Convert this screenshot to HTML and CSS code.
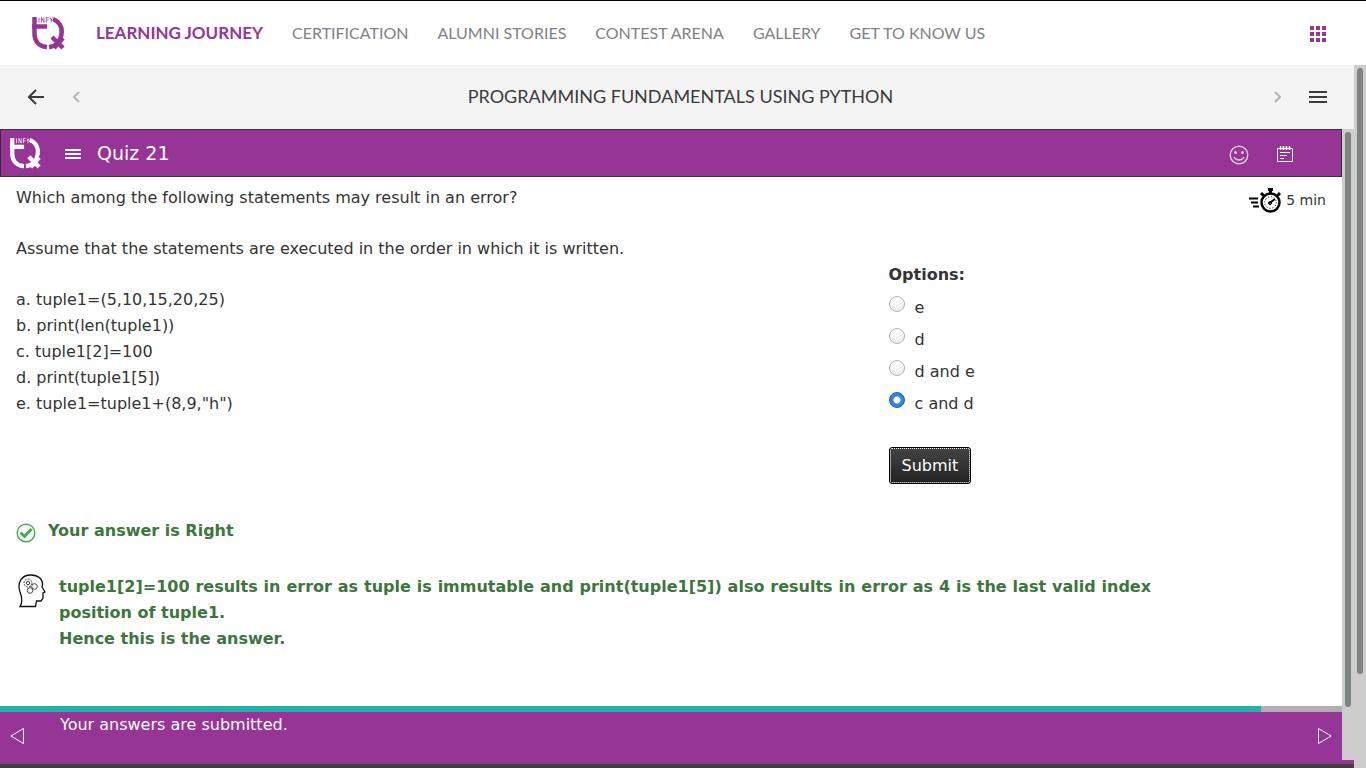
FILE: index.html
```html
<!DOCTYPE html>
<html lang="en">
<head>
<meta charset="utf-8">
<title>Programming Fundamentals using Python</title>
<link rel="stylesheet" href="styles.css">
</head>
<body>
<svg class="defs" width="0" height="0" aria-hidden="true">
  <symbol id="logo" viewBox="0 0 34 34">
    <path d="M3.500 1V18C3.500 26 9 30.500 16 31M1 10.500H16" fill="none" stroke="currentColor" stroke-width="4.500"/>
    <path d="M22 3C29 6 31.500 12 30.500 18C29.500 25 25 30.500 18 31M21 21L32 32M32 22L23 32" fill="none" stroke="currentColor" stroke-width="4.500"/>
    <path d="M8 1.500V6.500M10.500 6.500V1.500L13 6.500V1.500M15.300 6.500V1.500H17.500M15.300 4H17.500M19 1.500L20.200 4L21.400 1.500M20.200 4V6.500" fill="none" stroke="currentColor" stroke-width=".8"/>
  </symbol>
</svg>
<header class="site-header">
  <a href="#" class="brand" aria-label="InfyTQ"><svg width="34" height="34"><use href="#logo"/></svg></a>
  <nav class="site-nav">
    <a href="#" class="current">LEARNING JOURNEY</a>
    <a href="#">CERTIFICATION</a>
    <a href="#">ALUMNI STORIES</a>
    <a href="#">CONTEST ARENA</a>
    <a href="#">GALLERY</a>
    <a href="#">GET TO KNOW US</a>
  </nav>
  <button class="icon-button apps" aria-label="Apps"><svg width="16" height="16" fill="currentColor"><path d="M0 0h4v4H0zM6 0h4v4H6zM12 0h4v4h-4zM0 6h4v4H0zM6 6h4v4H6zM12 6h4v4h-4zM0 12h4v4H0zM6 12h4v4H6zM12 12h4v4h-4z"/></svg></button>
</header>
<div class="workspace">
  <div class="course">
    <div class="course-bar">
      <button class="icon-button" aria-label="Back"><svg width="16" height="16" fill="none" stroke="currentColor" stroke-width="2"><path d="M16 8H1M8 1L1 8L8 15"/></svg></button>
      <button class="icon-button faint" aria-label="Previous"><svg width="8" height="12" fill="none" stroke="currentColor" stroke-width="2"><path d="M7 1L2 6L7 11"/></svg></button>
      <h1 class="course-title">PROGRAMMING FUNDAMENTALS USING PYTHON</h1>
      <button class="icon-button faint" aria-label="Next"><svg width="8" height="12" fill="none" stroke="currentColor" stroke-width="2"><path d="M2 1L7 6L2 11"/></svg></button>
      <button class="icon-button" aria-label="Contents"><svg width="18" height="12" fill="currentColor"><path d="M0 0h18v2H0zM0 5h18v2H0zM0 10h18v2H0z"/></svg></button>
    </div>
    <div class="frame">
      <div class="player">
        <div class="quiz-bar">
          <svg class="quiz-logo" width="32" height="32"><use href="#logo"/></svg>
          <button class="icon-button menu" aria-label="Menu"><svg width="16" height="10" fill="currentColor"><path d="M0 0h16v2H0zM0 4h16v2H0zM0 8h16v2H0z"/></svg></button>
          <h2 class="quiz-title">Quiz 21</h2>
          <button class="icon-button smile" aria-label="Feedback"><svg width="20" height="20" fill="none" stroke="currentColor" stroke-width="1.400"><circle cx="10" cy="10" r="8.800"/><path d="M5 12C7 16 13 16 15 12"/><circle cx="6.500" cy="7.500" r=".8" fill="currentColor"/><circle cx="13.500" cy="7.500" r=".8" fill="currentColor"/></svg></button>
          <button class="icon-button notes" aria-label="Notes"><svg width="16" height="16" fill="none" stroke="currentColor"><path d="M.5 2.500H15.500V15.500H.5ZM3 6.500H13M3 9.500H10M3 12.500H7"/><path d="M3.500 0V4M6.500 0V4M9.500 0V4M12.500 0V4" stroke-width="1.500"/></svg></button>
        </div>
        <main class="quiz">
          <div class="question">
            <p>Which among the following statements may result in an error?</p>
            <p>Assume that the statements are executed in the order in which it is written.</p>
            <p>a. tuple1=(5,10,15,20,25)<br>b. print(len(tuple1))<br>c. tuple1[2]=100<br>d. print(tuple1[5])<br>e. tuple1=tuple1+(8,9,"h")</p>
          </div>
          <form class="answers">
            <fieldset class="options">
              <legend>Options:</legend>
              <label><input type="radio" name="answer">e</label>
              <label><input type="radio" name="answer">d</label>
              <label><input type="radio" name="answer">d and e</label>
              <label><input type="radio" name="answer" checked>c and d</label>
            </fieldset>
            <button type="button" class="submit">Submit</button>
          </form>
          <div class="timer">
            <svg width="32" height="26" viewBox="0 0 32 26" fill="none" stroke="#000"><circle cx="21.500" cy="14.500" r="9" stroke-width="2.500"/><circle cx="21.500" cy="14.500" r="5.800" stroke-dasharray="1 2"/><path d="M19 1.500H24M21.500 1V5M12 5L14.500 7.500M28.500 7.500L31 5" stroke-width="3"/><path d="M0 10.500H9M2 14.500H9M4 18.500H10" stroke-width="2"/><path d="M20 15.500L26 11" stroke-width="2"/><circle cx="21" cy="15" r="1.500"/></svg>
            <span>5 min</span>
          </div>
        </main>
        <section class="feedback">
          <p class="verdict"><svg width="20" height="20" fill="none" stroke="#3fae49"><circle cx="10" cy="10" r="8.800" stroke-width="1.400"/><path d="M4.500 9.500L8.500 13.500L15.500 6" stroke-width="2.800"/></svg>Your answer is Right</p>
          <div class="reason">
            <svg width="28" height="34" viewBox="0 0 28 34" fill="none" stroke="#111"><path d="M2 32.500C5 28 4 23 2 18C-1 9 3 1 13 1C20 1 25 5 24.500 11L24 13L27 18L25 19V24L23 27H18.500L17.500 32.500Z" stroke-width="1.300"/><g stroke="#444" stroke-width="1"><circle cx="10" cy="9" r="4" stroke-dasharray="2 1"/><circle cx="10" cy="9" r="1.700"/><circle cx="16.500" cy="12.500" r="2.800"/><circle cx="12" cy="16.500" r="2.800"/></g></svg>
            <p>tuple1[2]=100 results in error as tuple is immutable and print(tuple1[5]) also results in error as 4 is the last valid index position of tuple1.<br>Hence this is the answer.</p>
          </div>
        </section>
        <footer class="player-footer">
          <div class="progress"><div class="progress-fill" style="width:94%"></div></div>
          <div class="status-bar">
            <button class="icon-button" aria-label="Previous page"><svg width="14" height="16" fill="none" stroke="currentColor"><path d="M13.500 .5V15.500L.8 8Z"/></svg></button>
            <p>Your answers are submitted.</p>
            <button class="icon-button" aria-label="Next page"><svg width="14" height="16" fill="none" stroke="currentColor"><path d="M.5 .5V15.500L13.200 8Z"/></svg></button>
          </div>
        </footer>
      </div>
      <div class="scrollbar inner"><div class="thumb"></div></div>
    </div>
    <div class="course-end"></div>
  </div>
  <div class="scrollbar outer"><div class="thumb"></div></div>
</div>
</body>
</html>
```
FILE: styles.css
```css
* { box-sizing: border-box; }
body {
  margin: 0;
  min-height: 100vh;
  display: flex;
  flex-direction: column;
  background: #fff;
  color: #333;
  font: 16px/26px "DejaVu Sans", sans-serif;
}
p, h1, h2 { margin: 0; }
h1, h2 { font-weight: normal; }
svg { display: block; flex: none; }
.defs { position: absolute; }
.icon-button {
  display: block;
  flex: none;
  padding: 0;
  border: 0;
  background: none;
  color: inherit;
}
.site-header {
  height: 65px;
  flex: none;
  display: flex;
  align-items: center;
  padding: 0 40px 0 31px;
  border-top: 1px solid #000;
}
.brand { color: #963596; margin-right: 31px; }
.site-nav { display: flex; flex: 1; gap: 29px; }
.site-nav a {
  color: #808184;
  font: 16px/24px Lato, sans-serif;
  text-decoration: none;
}
.site-nav .current { color: #963596; font-size: 17px; font-weight: bold; }
.apps { color: #963596; padding-top: 2px; }
.workspace { flex: 1; display: flex; }
.course { flex: 1; display: flex; flex-direction: column; }
.course-bar {
  height: 64px;
  flex: none;
  display: flex;
  align-items: center;
  gap: 28px;
  padding: 0 27px 0 28px;
  background: #f4f4f4;
  color: #3b3b3d;
}
.faint { color: #b4b4b4; }
.course-title {
  flex: 1;
  padding: 0 0 3px 8px;
  font: 18px/24px Lato, sans-serif;
  text-align: center;
}
.frame { flex: 1; display: flex; }
.player { flex: 1; display: flex; flex-direction: column; }
.quiz-bar {
  height: 48px;
  flex: none;
  display: flex;
  align-items: center;
  padding: 0 48px 0 8px;
  background: #963596;
  border: 1px solid #333;
  color: #fff;
}
.quiz-logo { margin-right: 24px; }
.menu, .notes { padding-top: 2px; }
.quiz-title { flex: 1; margin-left: 16px; font-size: 19px; }
.smile { margin-right: 28px; padding-top: 4px; opacity: .75; }
.quiz {
  display: grid;
  grid-template-columns: 65% 1fr auto;
  padding: 8px 16px 0;
}
.question p { margin-bottom: 25px; }
.answers { padding: 77px 0 0 21px; }
.options { margin: 0; padding: 0; border: 0; }
.options legend { padding: 0; font-weight: bold; margin-bottom: 6px; }
.options label { display: flex; gap: 10px; height: 32px; line-height: 28px; }
.options input {
  appearance: none;
  width: 16px;
  height: 16px;
  margin: 2px 0 0;
  border: 1px solid #b6b0ab;
  border-radius: 50%;
  background: linear-gradient(#fff, #eee);
}
.options input:checked {
  border-color: #1a5fb4;
  background: radial-gradient(circle, #fff 0 3px, #3584e4 4px);
}
.submit {
  display: block;
  height: 37px;
  margin-top: 25px;
  padding: 0 12px;
  border: 1px solid #000;
  border-radius: 3px;
  background: linear-gradient(#444, #222);
  color: #fff;
  font: inherit;
  outline: 1px dotted #fff;
  outline-offset: -2px;
}
.timer { display: flex; gap: 5px; padding-top: 3px; font-size: 14px; line-height: 24px; }
.feedback {
  flex: 1;
  padding: 34px 16px 24px;
  color: #3c763d;
  font-weight: bold;
}
.verdict { display: flex; align-items: center; gap: 12px; margin-bottom: 30px; }
.verdict svg { margin-top: 3px; }
.reason { display: flex; gap: 13px; margin-right: 175px; padding-left: 2px; text-align: justify; }
.progress { height: 6px; background: #b0b0b0; }
.progress-fill { height: 100%; background: #20b2aa; }
.status-bar {
  height: 48px;
  display: flex;
  align-items: center;
  gap: 36px;
  padding: 0 10px;
  background: #963596;
  color: #fff;
}
.status-bar p { flex: 1; align-self: flex-start; }
.scrollbar { width: 12px; flex: none; background: #cdcdcd; padding: 3px; }
.thumb { border-radius: 3px; background: #7e8281; }
.inner .thumb { height: 92%; }
.outer .thumb { height: 87%; }
.course-end { height: 8px; flex: none; background: #963596; border-bottom: 4px solid #404040; }
```
